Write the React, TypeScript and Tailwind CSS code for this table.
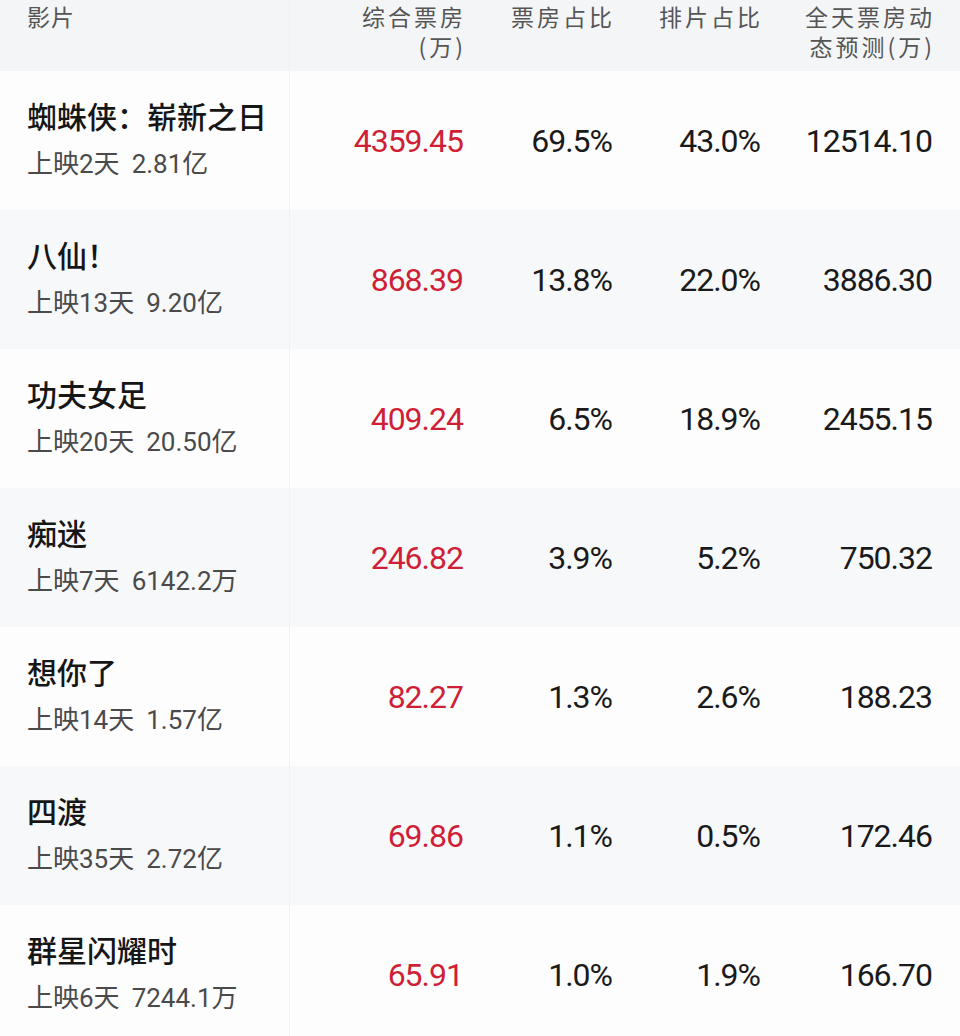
import React from "react";

type Row = {
  name: string;
  days: string;
  total: string;
  box: string;
  share: string;
  slot: string;
  forecast: string;
};

const rows: Row[] = [
  { name: "蜘蛛侠：崭新之日", days: "上映2天", total: "2.81亿", box: "4359.45", share: "69.5%", slot: "43.0%", forecast: "12514.10" },
  { name: "八仙！", days: "上映13天", total: "9.20亿", box: "868.39", share: "13.8%", slot: "22.0%", forecast: "3886.30" },
  { name: "功夫女足", days: "上映20天", total: "20.50亿", box: "409.24", share: "6.5%", slot: "18.9%", forecast: "2455.15" },
  { name: "痴迷", days: "上映7天", total: "6142.2万", box: "246.82", share: "3.9%", slot: "5.2%", forecast: "750.32" },
  { name: "想你了", days: "上映14天", total: "1.57亿", box: "82.27", share: "1.3%", slot: "2.6%", forecast: "188.23" },
  { name: "四渡", days: "上映35天", total: "2.72亿", box: "69.86", share: "1.1%", slot: "0.5%", forecast: "172.46" },
  { name: "群星闪耀时", days: "上映6天", total: "7244.1万", box: "65.91", share: "1.0%", slot: "1.9%", forecast: "166.70" },
];

const cjk = "font-['Noto_Sans_CJK_SC','Noto_Sans',sans-serif]";
const num = "font-['Roboto','Noto_Sans_CJK_SC',sans-serif]";

const grid = "grid grid-cols-[290px_173px_149px_148px_172px]";

export default function App() {
  return (
    <div className={`w-[960px] h-[1036px] overflow-hidden bg-white ${cjk}`}>
      {/* header */}
      <div className={`${grid} h-[71px] bg-[#f4f5f7] text-[23px] leading-[30px] text-[#555] tracking-[3px] pr-[28px]`}>
        <div className="pl-[27px] pt-[1px] border-r border-[#eef0f3] tracking-[1px]">影片</div>
        <div className="text-right pt-[1px] mr-[-3px]">
          <div>综合票房</div>
          <div>(万)</div>
        </div>
        <div className="text-right pt-[1px] mr-[-3px]">票房占比</div>
        <div className="text-right pt-[1px] mr-[-3px]">排片占比</div>
        <div className="text-right pt-[1px] mr-[-3px]">
          <div>全天票房动</div>
          <div>态预测(万)</div>
        </div>
      </div>
      {rows.map((r, i) => (
        <div
          key={r.name}
          className={`${grid} h-[139px] items-center ${i % 2 === 1 ? "bg-[#f7f8fa]" : "bg-[#fdfdfe]"}`}
        >
          <div className="h-full flex flex-col justify-start pt-[24px] pl-[27px] border-r border-[#f0f1f4]">
            <div className="text-[30px] leading-[40px] font-medium text-[#161616]">{r.name}</div>
            <div className="mt-[11px] text-[26px] leading-[36px] text-[#4a4a4a] flex">
              <span className={num}>{r.days}</span>
              <span className={`${num} ml-[12px]`}>{r.total}</span>
            </div>
          </div>
          <div className={`${num} text-right text-[32px] tracking-[-1px] text-[#cf1f37]`}>{r.box}</div>
          <div className={`${num} text-right text-[32px] tracking-[-1px] text-[#1a1a1a]`}>{r.share}</div>
          <div className={`${num} text-right text-[32px] tracking-[-1px] text-[#1a1a1a]`}>{r.slot}</div>
          <div className={`${num} text-right text-[32px] tracking-[-1px] text-[#1a1a1a]`}>{r.forecast}</div>
        </div>
      ))}
    </div>
  );
}
